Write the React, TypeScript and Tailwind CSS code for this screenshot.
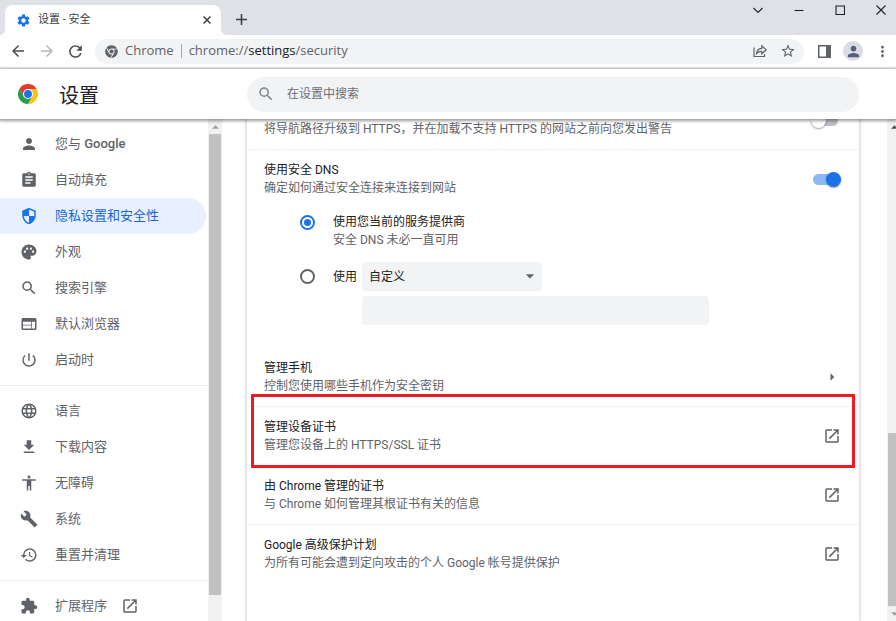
import type { ComponentType, ReactNode } from 'react';
import {
  MdAccessibility,
  MdArrowBack,
  MdArrowDropDown,
  MdArrowForward,
  MdArrowRight,
  MdAssignment,
  MdBuild,
  MdDownload,
  MdExtension,
  MdLanguage,
  MdMoreVert,
  MdOpenInNew,
  MdPalette,
  MdPerson,
  MdPowerSettingsNew,
  MdRefresh,
  MdRestore,
  MdSearch,
  MdSettings,
  MdStarBorder,
  MdWeb,
} from 'react-icons/md';
import { FaChrome } from 'react-icons/fa';

type IconType = ComponentType<{ className?: string }>;

function ShieldIcon({ className }: { className?: string }) {
  return (
    <svg viewBox="0 0 24 24" className={className} fill="currentColor" aria-hidden="true">
      <path
        fillRule="evenodd"
        d="M12 1 3 5v6c0 5.550 3.840 10.740 9 12 5.160-1.260 9-6.450 9-12V5l-9-4zM12 3.200V12H5c.530 4.120 3.280 7.790 7 8.940V12h7V6.300l-7-3.100z"
      />
    </svg>
  );
}

function ChromeLogo() {
  return (
    <svg viewBox="0 0 48 48" className="size-5" role="img" aria-label="Chrome">
      <path fill="#e33b2e" d="M3.200 12A24 24 0 0 1 44.800 12H24v12L13.600 30z" />
      <path fill="#fcc31e" d="M44.800 12A24 24 0 0 1 24 48L34.400 30 24 24V12z" />
      <path fill="#2a9d49" d="M24 48A24 24 0 0 1 3.200 12L13.600 30 24 24l10.400 6z" />
      <circle cx="24" cy="24" r="12" fill="#fff" />
      <circle cx="24" cy="24" r="9.500" fill="#1a73e8" />
    </svg>
  );
}

function TabStrip() {
  return (
    <div className="flex h-[35px] shrink-0 items-end bg-[#dee1e6] pl-[5px]">
      <div className="relative flex h-[30px] w-[216px] items-center rounded-t-lg bg-white pr-[9px] pl-[11px]">
        <svg viewBox="0 0 8 8" className="absolute bottom-0 -left-[5px] size-[5px]" fill="#fff" aria-hidden="true">
          <path d="M8 0v8H0a8 8 0 0 0 8-8z" />
        </svg>
        <svg viewBox="0 0 8 8" className="absolute -right-1.5 bottom-0 size-1.5" fill="#fff" aria-hidden="true">
          <path d="M0 0v8h8a8 8 0 0 1-8-8z" />
        </svg>
        <MdSettings className="size-[15px] text-[#1a73e8]" />
        <span className="ml-[7px] flex-1 text-[11px] text-[#3c4043]">设置 - 安全</span>
        <button type="button" aria-label="关闭标签页" className="p-px text-[#3c4043]">
          <svg viewBox="0 0 8 8" className="size-2" stroke="currentColor" strokeWidth="1.500" aria-hidden="true">
            <path d="M.5.500l7 7M7.500.500l-7 7" />
          </svg>
        </button>
      </div>
      <button type="button" aria-label="新标签页" className="mb-2.5 ml-[15px] text-[#3c4043]">
        <svg viewBox="0 0 11 11" className="size-[11px]" stroke="currentColor" strokeWidth="1.600" aria-hidden="true">
          <path d="M5.500 0v11M0 5.500h11" />
        </svg>
      </button>
      <div className="ml-auto flex items-center gap-[31px] self-start pt-[5px] pr-2.5 text-[#202124]">
        {[
          ['搜索标签页', 'M.5 3l4.500 4.500L9.500 3'],
          ['最小化', 'M.5 5.500h9'],
          ['最大化', 'M1 1h8.500v8.500H1z'],
          ['关闭', 'M.5.500l9 9M9.500.500l-9 9'],
        ].map(([label, d]) => (
          <button key={label} type="button" aria-label={label}>
            <svg viewBox="0 0 10 10" className="size-2.5" fill="none" stroke="currentColor" strokeWidth="1.100" aria-hidden="true">
              <path d={d} />
            </svg>
          </button>
        ))}
      </div>
    </div>
  );
}

function Toolbar() {
  return (
    <div className="flex h-[34px] shrink-0 items-center border-b-2 border-[#ededee] bg-white pr-[5px] pl-[9px] text-[#5f6368]">
      <button type="button" aria-label="后退"><MdArrowBack className="size-[18px] text-[#4b4f54]" /></button>
      <button type="button" aria-label="前进" className="ml-[11px]"><MdArrowForward className="size-[18px] text-[#b6b8bb]" /></button>
      <button type="button" aria-label="重新加载" className="ml-2.5"><MdRefresh className="size-[19px] text-[#4b4f54]" /></button>
      <div className="ml-2.5 flex h-[25px] flex-1 items-center rounded-full bg-[#f1f3f4] pr-2 pl-2.5 font-['Open_Sans','Noto_Sans_CJK_SC',sans-serif] text-[13px]">
        <FaChrome className="size-[13px]" />
        <span className="ml-[7px]">Chrome</span>
        <span className="mx-[7px] h-[14px] w-px bg-[#a4a7ab]" />
        <span className="flex-1">
          chrome://<span className="text-[#202124]">settings</span>/security
        </span>
        <button type="button" aria-label="分享此页面">
          <svg viewBox="0 0 14 14" className="size-[14px]" fill="none" stroke="currentColor" strokeWidth="1.200" aria-hidden="true">
            <path d="M1 3.500v9h10.500v-2.500M3.500 9.500c.4-3.400 2.300-5 5.300-5.200V1.800l4.400 4-4.400 4V7.300c-2.300 0-4 .6-5.300 2.200z" />
          </svg>
        </button>
        <button type="button" aria-label="为此标签页添加书签" className="ml-[13px]"><MdStarBorder className="size-4" /></button>
      </div>
      <button type="button" aria-label="侧边栏" className="ml-[14px]">
        <svg viewBox="0 0 13 13" className="size-[13px]" fill="currentColor" aria-hidden="true">
          <path fillRule="evenodd" d="M0 0h13v13H0zM1.500 1.500v10H8v-10z" />
        </svg>
      </button>
      <button type="button" aria-label="个人资料" className="ml-3 flex size-5 items-center justify-center rounded-full bg-[#dadde3]">
        <MdPerson className="size-[17px] text-[#566078]" />
      </button>
      <button type="button" aria-label="更多" className="ml-[11px]"><MdMoreVert className="size-[17px]" /></button>
    </div>
  );
}

function Header() {
  return (
    <header className="relative z-20 flex h-[50px] shrink-0 items-center bg-white pr-[37px] shadow-[0_1px_3px_1px_rgba(0,0,0,0.4)]">
      <div className="flex w-[247px] shrink-0 items-center gap-[21px] pl-[18px]">
        <ChromeLogo />
        <h1 className="pt-[3px] text-[20px] leading-6 text-[#202124]">设置</h1>
      </div>
      <label className="flex h-[35px] flex-1 items-center gap-3 rounded-full bg-[#f1f3f4] pl-2.5">
        <MdSearch className="size-[18px] text-[#80868b]" />
        <input
          type="search"
          aria-label="在设置中搜索"
          placeholder="在设置中搜索"
          className="flex-1 bg-transparent text-[12px] outline-none placeholder:text-[#6b6f74]"
        />
      </label>
    </header>
  );
}

const menuGroups: { label: string; icon: IconType; active?: boolean; external?: boolean }[][] = [
  [
    { label: '您与 Google', icon: MdPerson },
    { label: '自动填充', icon: MdAssignment },
    { label: '隐私设置和安全性', icon: ShieldIcon, active: true },
    { label: '外观', icon: MdPalette },
    { label: '搜索引擎', icon: MdSearch },
    { label: '默认浏览器', icon: MdWeb },
    { label: '启动时', icon: MdPowerSettingsNew },
  ],
  [
    { label: '语言', icon: MdLanguage },
    { label: '下载内容', icon: MdDownload },
    { label: '无障碍', icon: MdAccessibility },
    { label: '系统', icon: MdBuild },
    { label: '重置并清理', icon: MdRestore },
  ],
  [{ label: '扩展程序', icon: MdExtension, external: true }],
];

function Sidebar() {
  return (
    <nav className="w-[208px] shrink-0 overflow-hidden pt-[7px] text-[13px] text-[#5f6368]">
      {menuGroups.map((group, index) => (
        <ul key={index} className={index > 0 ? 'mt-[7px] border-t border-[#e8eaed] pt-[7px]' : ''}>
          {group.map(({ label, icon: Icon, active, external }) => (
            <li key={label}>
              <a
                href="#"
                aria-current={active ? 'page' : undefined}
                className={
                  active
                    ? 'mr-0.5 flex h-9 items-center rounded-r-full bg-[#e8f0fe] pl-5 text-[#1967d2]'
                    : 'mr-0.5 flex h-9 items-center pl-5'
                }
              >
                <Icon className={active ? 'size-[18px] text-[#1a73e8]' : 'size-[18px]'} />
                <span className="ml-[17px]">
                  {label.split(' ').map((part, i) =>
                    i === 0 ? part : <span key={part} className="font-medium"> {part}</span>,
                  )}
                </span>
                {external && <MdOpenInNew className="ml-[14px] size-[18px]" />}
              </a>
            </li>
          ))}
        </ul>
      ))}
    </nav>
  );
}

function ScrollArrow({ down, faded }: { down?: boolean; faded?: boolean }) {
  return (
    <div className="flex h-[15px] shrink-0 items-center justify-center">
      <svg viewBox="0 0 8 4" className="h-1 w-[7px]" fill={faded ? '#a0a0a0' : '#505050'} aria-hidden="true">
        <path d={down ? 'M0 0h8L4 4z' : 'M0 4h8L4 0z'} />
      </svg>
    </div>
  );
}

function TextPair({ title, detail }: { title?: string; detail: string }) {
  return (
    <div className="flex-1 text-[12px] leading-[18px] text-[#5f6368]">
      {title && <p className="text-[#202124]">{title}</p>}
      <p>{detail}</p>
    </div>
  );
}

function Toggle({ label, on }: { label: string; on?: boolean }) {
  return (
    <label className="relative flex h-[15px] w-7 items-center">
      <input type="checkbox" role="switch" aria-label={label} defaultChecked={on} className="peer absolute inset-0 appearance-none" />
      <span className="h-[11px] w-[27px] rounded-full bg-[#bdc1c6] peer-checked:bg-[#8cb8f5]" />
      <span className="absolute top-0 left-0 size-[15px] rounded-full bg-white shadow-[0_1px_2px_rgba(60,64,67,0.5)] peer-checked:left-[13px] peer-checked:bg-[#1a73e8]" />
    </label>
  );
}

const radioClass =
  'size-[15px] shrink-0 appearance-none rounded-full border-2 border-[#5f6368] bg-white bg-clip-content p-[2px] checked:border-[#1a73e8] checked:bg-[#1a73e8]';

function LinkRow({ title, detail, icon, highlighted }: { title: string; detail: string; icon: ReactNode; highlighted?: boolean }) {
  return (
    <a href="#" className="relative flex h-[59px] border-b border-[#f0f1f2] px-[17px] pt-[11px] last:border-b-0">
      <TextPair title={title} detail={detail} />
      <span className="flex h-9 items-center pr-px text-[#5f6368]">{icon}</span>
      {highlighted && (
        <span className="pointer-events-none absolute -top-[13px] right-1 -bottom-[3px] left-1 z-10 border-3 border-[#ed1c24]" />
      )}
    </a>
  );
}

function SecureDns() {
  return (
    <section className="flex min-h-[198px] flex-col px-[17px] pt-[11px]">
      <div className="flex items-center pr-px">
        <TextPair title="使用安全 DNS" detail="确定如何通过安全连接来连接到网站" />
        <Toggle label="使用安全 DNS" on />
      </div>
      <div className="mt-4 ml-9 text-[12px]">
        <label className="flex items-start gap-[18px]">
          <input type="radio" name="dns" defaultChecked className={`${radioClass} mt-0.5`} />
          <TextPair title="使用您当前的服务提供商" detail="安全 DNS 未必一直可用" />
        </label>
        <div className="mt-[13px] flex items-center">
          <label className="flex w-[62px] items-center gap-[18px]">
            <input type="radio" name="dns" className={radioClass} />
            <span className="shrink-0 text-[#202124]">使用</span>
          </label>
          <div className="relative h-[29px] w-[180px]">
            <select aria-label="服务提供商" className="size-full appearance-none rounded bg-[#f1f3f4] pl-[7px] text-[#202124]">
              <option>自定义</option>
            </select>
            <MdArrowDropDown className="pointer-events-none absolute top-1 right-0.5 size-5 text-[#5f6368]" />
          </div>
        </div>
        <input
          type="text"
          aria-label="自定义提供商"
          className="mt-[5px] ml-[62px] block h-[29px] w-[347px] rounded bg-[#f1f3f4] px-2"
        />
      </div>
    </section>
  );
}

function SettingsCard() {
  const external = <MdOpenInNew className="size-[18px]" />;
  return (
    <main className="min-w-0 flex-1 overflow-hidden px-[25px] pr-7">
      <div className="h-full bg-white shadow-[0_0_3px_1px_rgba(60,64,67,0.24)]">
        <div className="flex h-[31px] items-start border-b border-[#f0f1f2] px-[17px]">
          <div className="flex-1 pt-px">
            <TextPair detail="将导航路径升级到 HTTPS，并在加载不支持 HTTPS 的网站之前向您发出警告" />
          </div>
          <div className="-mt-1.5 mr-[3px]">
            <Toggle label="始终使用安全连接" />
          </div>
        </div>
        <SecureDns />
        <LinkRow title="管理手机" detail="控制您使用哪些手机作为安全密钥" icon={<MdArrowRight className="size-[18px]" />} />
        <LinkRow title="管理设备证书" detail="管理您设备上的 HTTPS/SSL 证书" icon={external} highlighted />
        <LinkRow title="由 Chrome 管理的证书" detail="与 Chrome 如何管理其根证书有关的信息" icon={external} />
        <LinkRow title="Google 高级保护计划" detail="为所有可能会遭到定向攻击的个人 Google 帐号提供保护" icon={external} />
      </div>
    </main>
  );
}

export default function App() {
  return (
    <div className="flex h-screen flex-col overflow-hidden bg-white font-[Roboto,'Noto_Sans_CJK_SC',sans-serif]">
      <TabStrip />
      <Toolbar />
      <Header />
      <div className="flex min-h-0 flex-1">
        <Sidebar />
        <div className="flex w-[14px] shrink-0 flex-col bg-[#f1f1f1]">
          <ScrollArrow faded />
          <div className="mx-px grow-461 basis-0 bg-[#c1c1c1]" />
          <div className="grow-26 basis-0" />
        </div>
        <SettingsCard />
        <div className="w-[9px] shrink-0 overflow-hidden">
          <div className="flex h-full w-[14px] flex-col bg-[#f1f1f1]">
            <ScrollArrow />
            <div className="grow-298 basis-0" />
            <div className="ml-px grow-173 basis-0 bg-[#c1c1c1]" />
            <ScrollArrow down faded />
          </div>
        </div>
      </div>
    </div>
  );
}
